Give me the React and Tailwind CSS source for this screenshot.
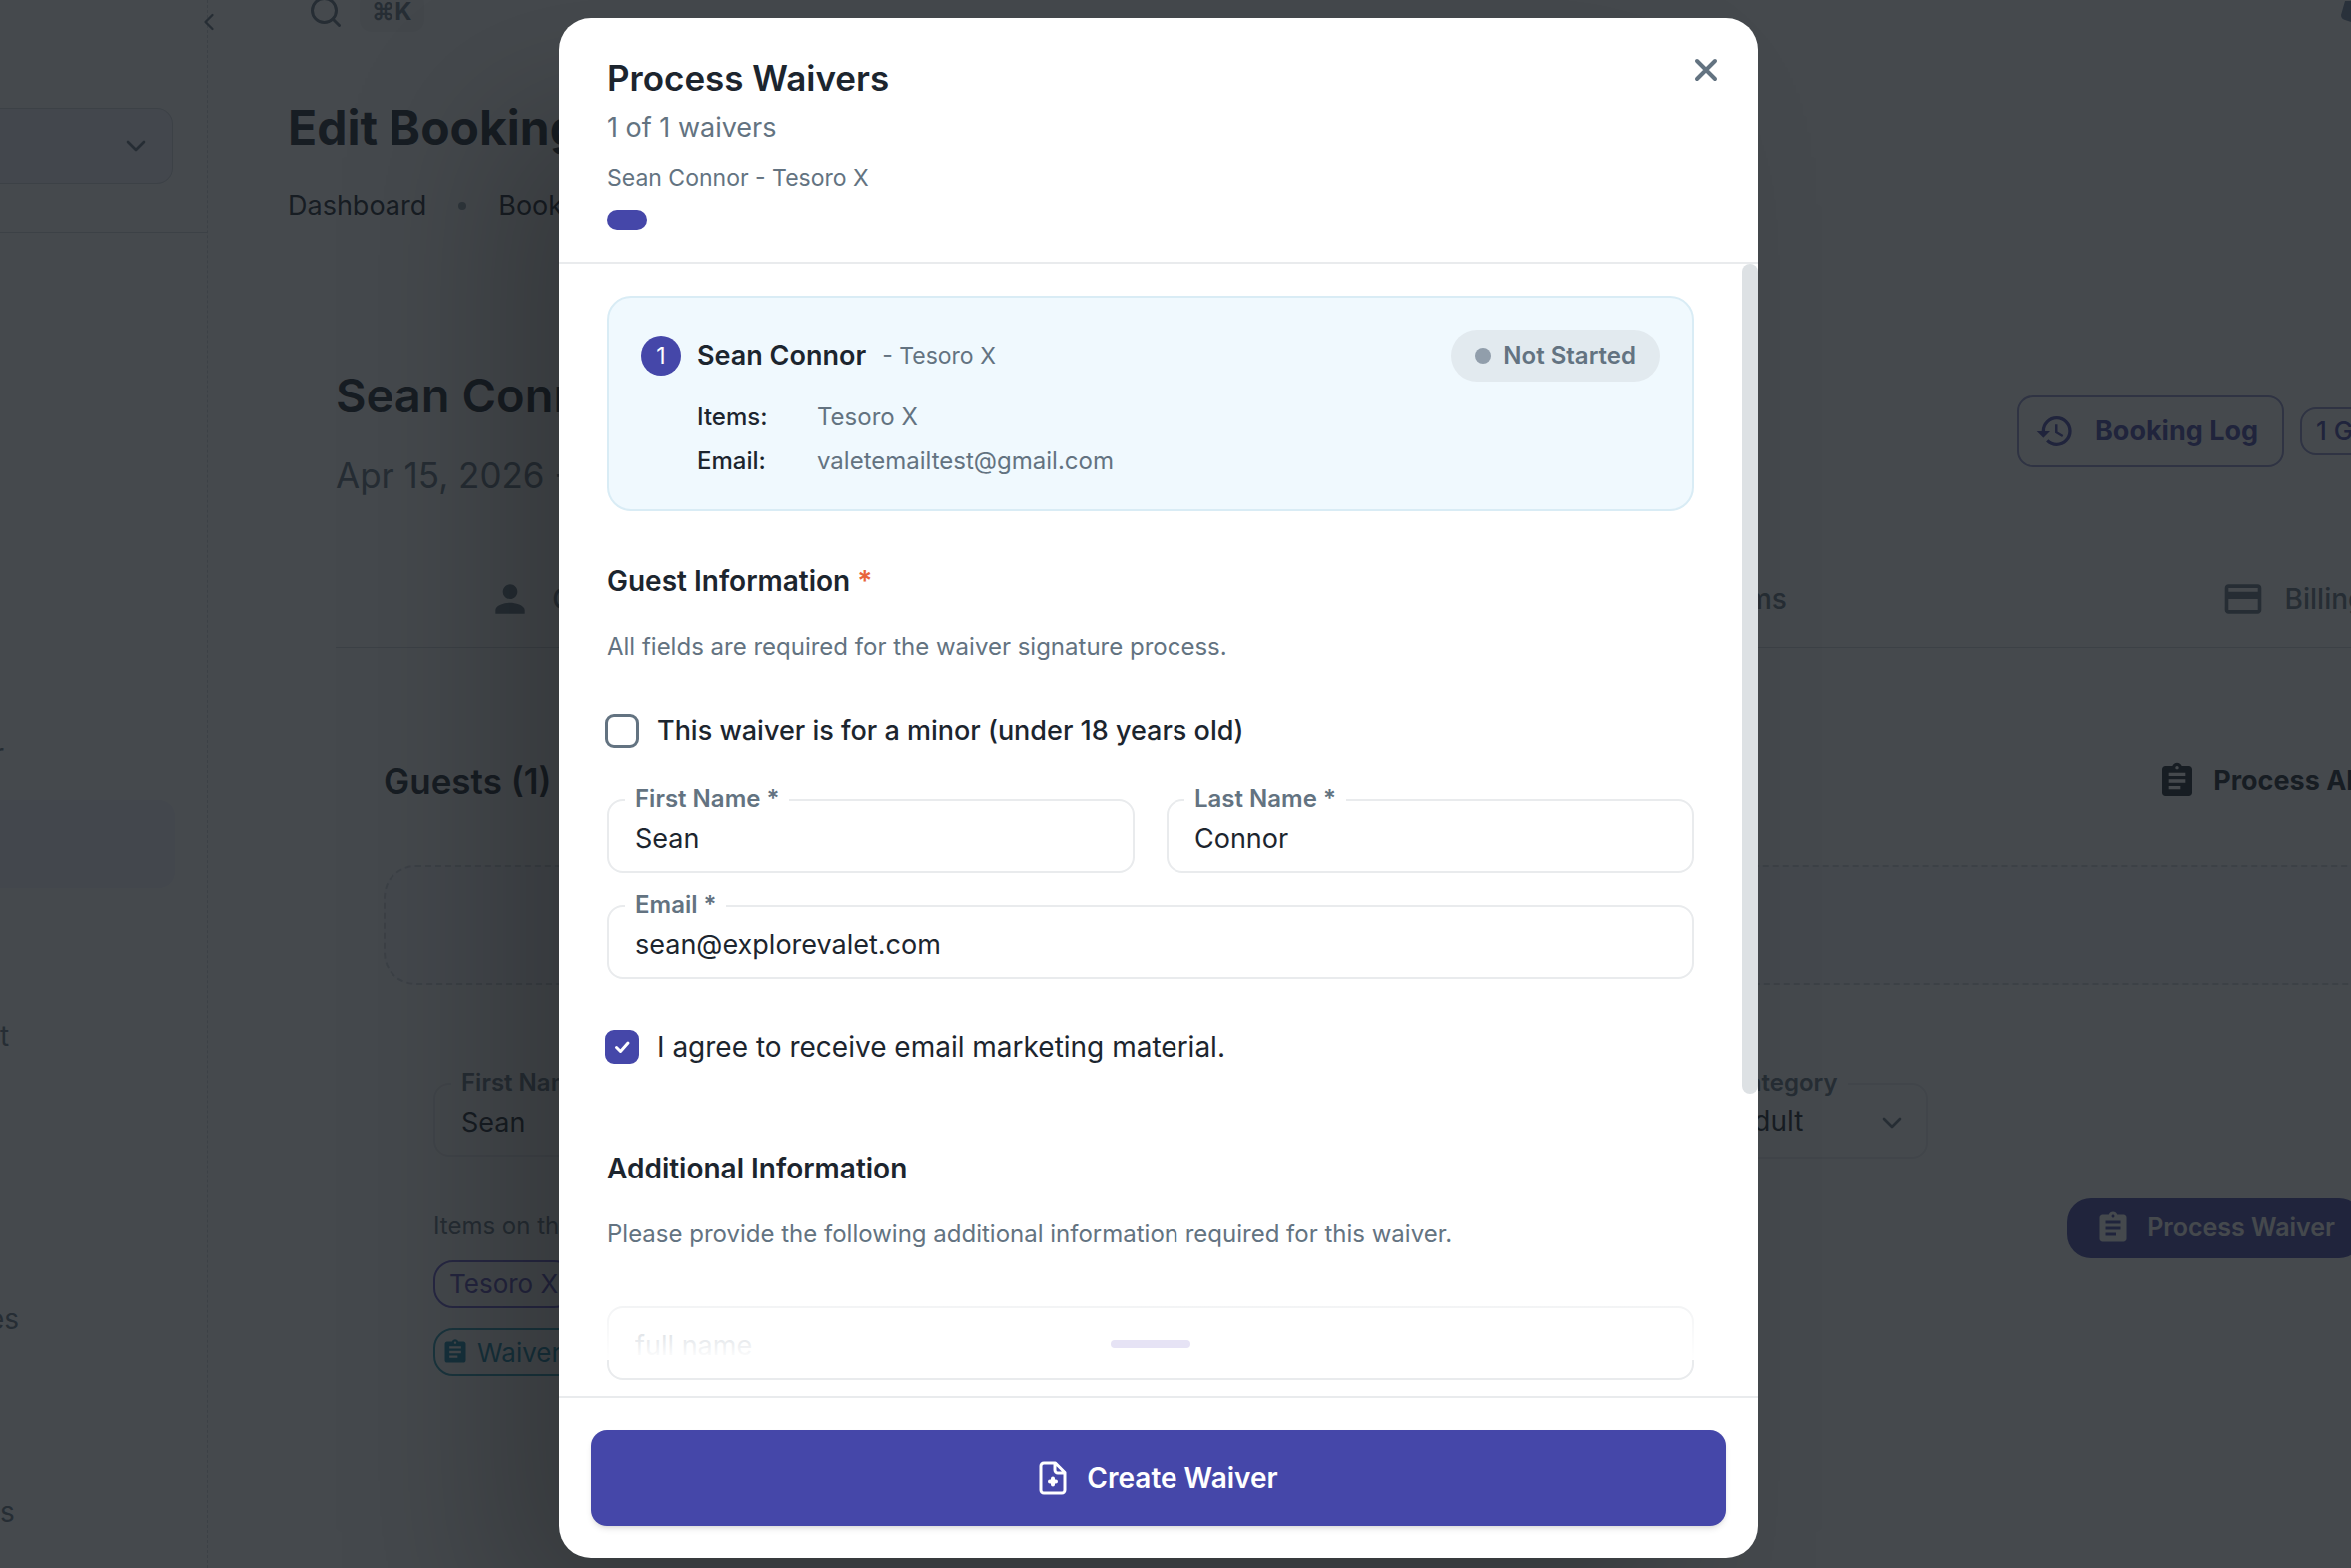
import React, { useState } from "react";
import { MdAssignment, MdHistory, MdOutlineCreditCard, MdPerson } from "react-icons/md";
import { FiChevronDown, FiChevronLeft, FiSearch } from "react-icons/fi";

const sideItems = [
    { label: "t", className: "mt-[126px]" },
    { label: "es", className: "mt-[240px] -ml-3" },
    { label: "s", className: "mt-[149px]" },
];

function Sidebar() {
    return (
        <aside className="w-[208px] shrink-0 h-full border-r border-dashed border-gray-300 flex flex-col text-[28px] leading-[44px] text-[#637381]">
            <div className="h-[108px] shrink-0 flex items-start justify-end pt-1">
                <button aria-label="Collapse menu" className="h-9 w-9 -mr-5 flex items-center justify-center">
                    <FiChevronLeft className="h-7 w-7" />
                </button>
            </div>
            <button aria-label="Workspace" className="h-[76px] shrink-0 mr-[34px] pr-5 rounded-r-2xl border border-l-0 border-gray-300 bg-[#f4f4fc] flex items-center justify-end">
                <FiChevronDown className="h-8 w-8" />
            </button>
            <hr className="mt-12 border-gray-300" />
            <div className="mt-[500px] w-1 flex justify-end overflow-hidden">r</div>
            <div className="mt-6 h-[88px] shrink-0 mr-8 rounded-r-2xl bg-[#f4f4fc]" />
            {sideItems.map((item) => (
                <a key={item.label} href="#" className={item.className}>{item.label}</a>
            ))}
        </aside>
    );
}

function Tab({ icon: Icon, label }) {
    return (
        <button className="flex items-center justify-center gap-5 text-[28px] font-medium text-[#637381]">
            <Icon className="h-11 w-11" />
            {label}
        </button>
    );
}

function BookingPage() {
    return (
        <div className="h-full flex overflow-hidden bg-white text-[#1c252e]">
            <Sidebar />
            <main className="flex-1 min-w-0 pl-20 overflow-hidden">
                <div className="h-11 -mt-2.5 flex items-center justify-between">
                    <div className="flex items-center gap-4 pl-5 text-[#637381]">
                        <FiSearch className="h-9 w-9" />
                        <span className="rounded-xl bg-gray-100 px-3 text-[24px] leading-[40px] font-bold">⌘K</span>
                    </div>
                    <svg viewBox="0 0 20 44" className="h-11 w-2.5" aria-hidden="true">
                        <path d="M8 0 L0 28 Q0 36 8 38 L20 42 V0Z" fill="#7387a5" />
                    </svg>
                </div>

                <h1 className="mt-[62px] text-[48px] leading-[64px] font-bold whitespace-nowrap">Edit Booking</h1>
                <nav className="mt-6 flex items-center gap-8 text-[27px] leading-[44px]">
                    <a href="#">Dashboard</a>
                    <span className="h-2 w-2 rounded-full bg-[#919eab]" />
                    <a href="#">Bookings</a>
                </nav>

                <section className="mt-[136px] ml-12">
                    <div className="flex justify-between">
                        <div>
                            <h2 className="text-[47px] leading-[64px] font-semibold whitespace-nowrap">Sean Connor</h2>
                            <p className="mt-5 text-[35px] leading-[56px] text-[#637381] whitespace-nowrap">Apr 15, 2026 - Apr 15, 2026</p>
                        </div>
                        <div className="mt-8 -mr-[72px] h-[72px] flex items-center gap-4 text-[#4547a9]">
                            <button className="h-full flex items-center gap-5 rounded-2xl border-2 border-[#4547a9]/60 pl-4 pr-6 text-[27px] font-bold whitespace-nowrap">
                                <MdHistory className="h-10 w-10" />
                                Booking Log
                            </button>
                            <span className="h-12 rounded-2xl border-2 border-[#4547a9]/60 px-3.5 text-[26px] leading-[44px] font-medium whitespace-nowrap">1 Guest</span>
                        </div>
                    </div>
                    <div className="mt-12 -ml-14 h-24 w-[2304px] grid grid-cols-4">
                        <Tab icon={MdPerson} label="Guests" />
                        <Tab icon={MdAssignment} label="Forms" />
                        <Tab icon={MdAssignment} label="Items" />
                        <Tab icon={MdOutlineCreditCard} label="Billing" />
                    </div>
                    <hr className="border-gray-300" />

                    <div className="ml-12 mt-[109px]">
                        <div className="h-12 flex items-center justify-between">
                            <h3 className="text-[35px] font-semibold">Guests (1)</h3>
                            <button className="-mr-2.5 flex items-center gap-4 text-[27px] font-bold whitespace-nowrap">
                                <MdAssignment className="h-10 w-10" />
                                Process All
                            </button>
                        </div>
                        <div className="mt-[60px] -mr-16 h-[120px] rounded-[32px] border-2 border-dashed border-gray-300 bg-[#f7f7fd]" />

                        <div className="ml-[50px] mt-[98px]">
                            <div className="flex gap-8 w-[1496px]">
                                <Field id="guest-first" label="First Name" value="Sean" />
                                <Field id="guest-last" label="Last Name" value="Connor" />
                                <div className="relative w-[280px] shrink-0">
                                    <label htmlFor="guest-category" className="absolute left-[72px] -top-4 z-10 bg-white px-2.5 text-[24px] leading-[32px] font-semibold text-[#637381]">Category</label>
                                    <select id="guest-category" className="h-[76px] w-full appearance-none rounded-2xl border-2 border-[#e9ebed] pl-[84px] text-[28px]">
                                        <option>Adult</option>
                                    </select>
                                    <FiChevronDown className="pointer-events-none absolute right-5 top-6 h-8 w-8 text-[#637381]" />
                                </div>
                            </div>
                            <div className="mt-[50px] flex items-start justify-between">
                                <div className="flex flex-col items-start gap-5 whitespace-nowrap">
                                    <p className="text-[24px] leading-[36px] text-[#637381] -mb-1">Items on this booking</p>
                                    <span className="h-12 rounded-[20px] border-2 border-[#6a5acd] px-3.5 text-[26px] leading-[44px] text-[#5a4ab8]">Tesoro X</span>
                                    <span className="h-12 flex items-center gap-2 rounded-[20px] border-2 border-[#2b9ab5] px-1.5 text-[26px] text-[#1488a8]">
                                        <MdAssignment className="h-7 w-7" />
                                        Waiver: Not Started
                                    </span>
                                </div>
                                <button className="-mr-3 -mt-2.5 h-[60px] flex items-center gap-4 rounded-3xl bg-[#4547a9] px-7 text-[25px] font-semibold text-white whitespace-nowrap">
                                    <MdAssignment className="h-9 w-9" />
                                    Process Waiver
                                </button>
                            </div>
                        </div>
                    </div>
                </section>
            </main>
        </div>
    );
}

function Field({ id, label, value, type = "text", placeholder }) {
    const [val, setVal] = useState(value || "");

    return (
        <div className="relative flex-1 min-w-0">
            {label && (
                <label htmlFor={id} className="absolute left-[18px] -top-4 bg-white px-2.5 text-[24px] leading-[32px] font-semibold text-[#637381]">
                    {label}
                </label>
            )}
            <input
                id={id}
                type={type}
                value={val}
                placeholder={placeholder}
                aria-label={label ? undefined : placeholder}
                onChange={(e) => setVal(e.target.value)}
                className="block h-[74px] w-full rounded-2xl border-2 border-[#e9ebed] px-[26px] pt-1 text-[27px] placeholder:text-[#919eab]"
            />
        </div>
    );
}

function Checkbox({ label, defaultChecked, className }) {
    return (
        <label className={"-ml-0.5 flex items-center gap-[18px] leading-[44px] " + className}>
            <span className="grid">
                <input
                    type="checkbox"
                    defaultChecked={defaultChecked}
                    className="peer col-start-1 row-start-1 h-[34px] w-[34px] appearance-none rounded-[9px] border-[3px] border-[#637381] checked:border-[#4547a9] checked:bg-[#4547a9]"
                />
                <svg viewBox="0 0 34 34" className="pointer-events-none col-start-1 row-start-1 h-[34px] w-[34px] opacity-0 peer-checked:opacity-100" fill="none" stroke="white" strokeWidth="3" strokeLinecap="round" strokeLinejoin="round">
                    <path d="M11.500 17.500l4 4 7.500-8.500" />
                </svg>
            </span>
            {label}
        </label>
    );
}

function WaiverDialog() {
    return (
        <div role="dialog" aria-labelledby="waiver-title" className="flex h-full w-[1200px] flex-col overflow-hidden rounded-[32px] bg-white text-[#1c252e] shadow-[-80px_80px_160px_-16px_rgba(0,0,0,0.24)]">
            <header className="flex items-start justify-between border-b-2 border-[#e9ebed] pl-12 pr-8 pt-9 pb-8">
                <div>
                    <h2 id="waiver-title" className="text-[35px] leading-[48px] font-semibold">Process Waivers</h2>
                    <p className="mt-1 text-[27px] leading-[44px] text-[#637381]">1 of 1 waivers</p>
                    <p className="mt-2.5 text-[23px] leading-[36px] text-[#637381]">Sean Connor - Tesoro X</p>
                    <div className="mt-3.5 h-5 w-10 rounded-[10px] bg-[#4547a9]" />
                </div>
                <button aria-label="Close" className="-mt-1 flex h-10 w-10 items-center justify-center text-[#637381]">
                    <svg viewBox="0 0 24 24" className="h-6 w-6" fill="none" stroke="currentColor" strokeWidth="4" strokeLinecap="round">
                        <path d="M3 3l18 18M21 3L3 21" />
                    </svg>
                </button>
            </header>

            <div className="relative min-h-0 flex-1 overflow-hidden pl-12 pr-16 pt-8">
                <section className="rounded-3xl border-2 border-[#d9ecf5] bg-[#f0f9fe] px-8 pt-8 pb-[30px]">
                    <div className="flex items-center">
                        <span className="flex h-10 w-10 items-center justify-center rounded-full bg-[#4547a9] text-[23px] text-white">1</span>
                        <h3 className="ml-4 text-[27px] font-semibold">Sean Connor</h3>
                        <span className="ml-4 text-[23px] text-[#637381]">- Tesoro X</span>
                        <span className="ml-auto flex h-[52px] items-center gap-3 rounded-full bg-[#e2eaef] px-6 text-[24px] font-semibold text-[#637381]">
                            <span className="h-4 w-4 rounded-full bg-[#919eab]" />
                            Not Started
                        </span>
                    </div>
                    <dl className="ml-14 mt-[18px] grid grid-cols-[120px_1fr] gap-y-2 text-[24px] leading-[36px]">
                        <dt className="font-medium">Items:</dt>
                        <dd className="text-[#637381]">Tesoro X</dd>
                        <dt className="font-medium">Email:</dt>
                        <dd className="text-[#637381]">valetemailtest@gmail.com</dd>
                    </dl>
                </section>

                <h3 className="mt-12 text-[28px] leading-[44px] font-semibold">
                    Guest Information <span className="text-[#e8643c]">*</span>
                </h3>
                <p className="mt-[26px] text-[24px] leading-[36px] text-[#637381]">All fields are required for the waiver signature process.</p>
                <Checkbox label="This waiver is for a minor (under 18 years old)" className="mt-11 text-[27px] font-medium" />
                <div className="mt-[46px] flex gap-8">
                    <Field id="first-name" label="First Name *" value="Sean" />
                    <Field id="last-name" label="Last Name *" value="Connor" />
                </div>
                <div className="mt-8 flex">
                    <Field id="email" label="Email *" type="email" value="sean@explorevalet.com" />
                </div>
                <Checkbox label="I agree to receive email marketing material." defaultChecked className="mt-[46px] text-[28px]" />

                <h3 className="mt-[78px] text-[28px] leading-[44px] font-semibold">Additional Information</h3>
                <p className="mt-[26px] text-[24px] leading-[36px] text-[#637381]">Please provide the following additional information required for this waiver.</p>
                <div className="mt-[54px] flex">
                    <Field id="full-name" placeholder="full name" />
                </div>

                {/* fade and grab handle over the end of the scroll area */}
                <div className="pointer-events-none absolute inset-x-0 bottom-9 flex h-24 items-end justify-center bg-linear-to-b from-white/0 to-white pb-3 pr-4">
                    <div className="h-2 w-20 rounded-full bg-[#e6e3f5]" />
                </div>
                <div className="absolute right-0 top-0 h-[831px] w-4 rounded-full bg-[#dde1e4]" />
            </div>

            <footer className="border-t-2 border-[#e9ebed] p-8">
                <button className="flex h-24 w-full items-center justify-center gap-5 rounded-2xl bg-[#4547a9] text-[28px] font-semibold text-white shadow-md">
                    <svg viewBox="0 0 28 34" className="h-[34px] w-7" fill="none" stroke="currentColor" strokeWidth="3" strokeLinejoin="round" strokeLinecap="round">
                        <path d="M16.500 2H5a3 3 0 0 0-3 3v24a3 3 0 0 0 3 3h18a3 3 0 0 0 3-3V11.500zM16 2.500V9a3 3 0 0 0 3 3h6.500" />
                        <path d="M14 17.500v6M11 20.500h6" strokeWidth="4" />
                    </svg>
                    Create Waiver
                </button>
            </footer>
        </div>
    );
}

export default function App() {
    return (
        <div className="relative h-screen overflow-hidden font-['Inter','Liberation_Sans',sans-serif]">
            <BookingPage />
            <div className="absolute inset-0 z-20 flex justify-center bg-[#161b20]/80 pt-[18px] pb-2.5 pr-[34px]">
                <WaiverDialog />
            </div>
        </div>
    );
}
